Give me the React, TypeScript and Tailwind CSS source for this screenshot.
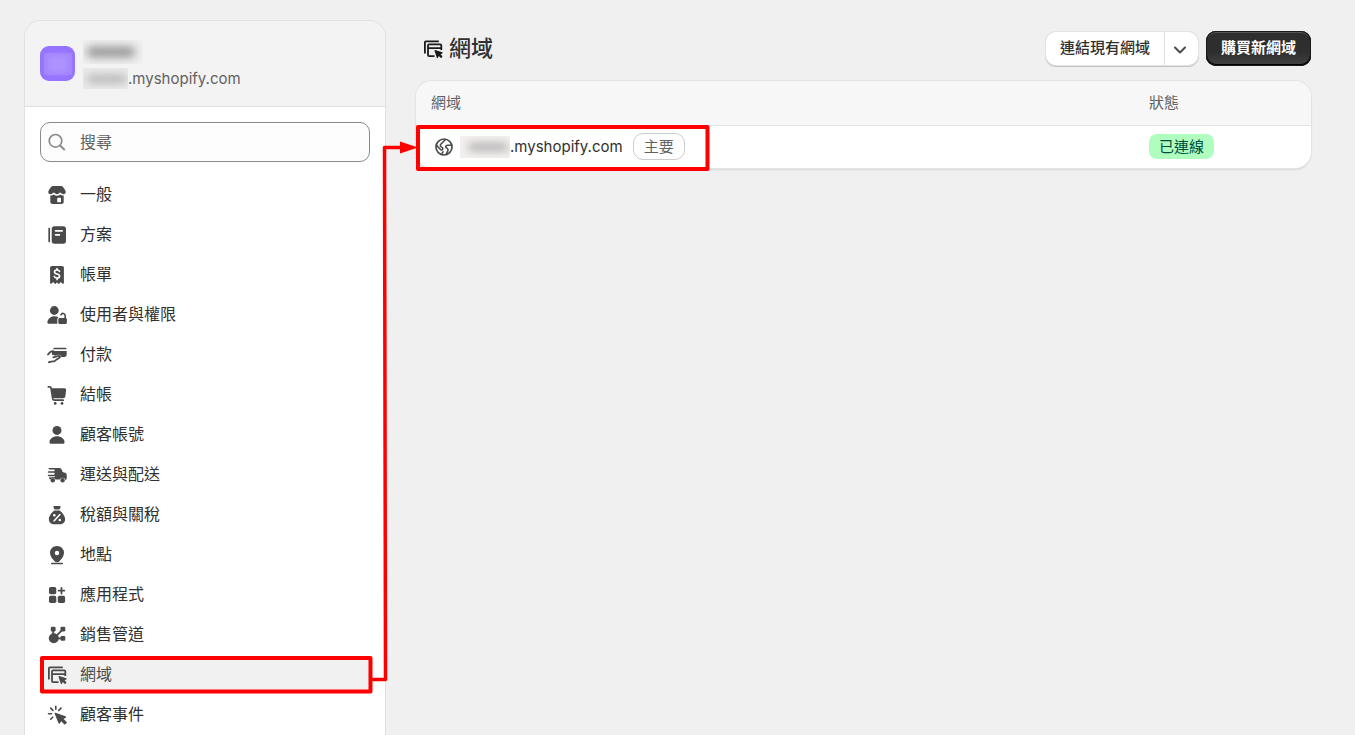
import type { ReactNode } from "react";

function Icon({ children, className = "text-[#4a4a4a]" }: { children: ReactNode; className?: string }) {
  return (
    <svg viewBox="0 0 20 20" fill="currentColor" aria-hidden="true" className={`size-5 shrink-0 ${className}`}>
      {children}
    </svg>
  );
}

const line = { fill: "none", stroke: "currentColor", strokeLinecap: "round", strokeLinejoin: "round" } as const;

const StoreIcon = (
  <>
    <path d="M6 1h8c.8 0 1.500.3 2 .9l2.200 3.300c.9 1.500.7 3.200-.8 3.800-1.300.5-2.600 0-3.400-1-.5-.7-1.200-.7-1.700 0-.6.700-1.400 1.200-2.300 1.200S8.300 8.700 7.700 8c-.5-.7-1.200-.7-1.700 0-.8 1-2.100 1.500-3.400 1C1.100 8.400.9 6.700 1.800 5.200L4 1.900C4.500 1.300 5.200 1 6 1z" />
    <path d="M3.300 10.500c1.300.2 2.500-.1 3.500-.9 1 .8 2.100 1.200 3.200 1.200s2.200-.4 3.200-1.200c1 .8 2.200 1.100 3.500.9v6a2.500 2.500 0 0 1-2.500 2.500H5.800a2.500 2.500 0 0 1-2.500-2.500z" />
    <path d="M11 12.700h2.200c.4 0 .8.4.8.8v3.700h-3.800v-3.700c0-.4.4-.8.8-.8z" fill="#fff" />
  </>
);

const PlanIcon = (
  <>
    <path d="M7.500 1.200h8.700a2.800 2.800 0 0 1 2.800 2.800v12a2.800 2.800 0 0 1-2.800 2.800H7.500A2.800 2.800 0 0 1 4.700 16V4a2.800 2.800 0 0 1 2.800-2.800z" />
    <path {...line} strokeWidth="1.700" d="M2.200 3.600v12.800" />
    <path {...line} stroke="#fff" strokeWidth="1.700" d="M8.600 5.800h6.600M8.600 9.800h3.800" />
  </>
);

const BillIcon = (
  <>
    <path d="M5 1h10c1.200 0 1.900.7 1.900 1.900v15c0 .9-.9 1.200-1.500.7l-1.700-1.500-1.300 1.400c-.4.5-1 .5-1.400 0l-1-1.200-1 1.200c-.4.5-1 .5-1.400 0l-1.300-1.400-1.700 1.500c-.6.5-1.500.2-1.500-.7v-15C3.100 1.700 3.800 1 5 1z" />
    <path {...line} stroke="#fff" strokeWidth="1.700" d="M12.500 6.300c-.4-.9-1.300-1.300-2.500-1.300-1.500 0-2.500.7-2.500 1.900 0 2.900 5.100 1.400 5.100 4.100 0 1.200-1.100 2-2.600 2-1.300 0-2.300-.6-2.700-1.500M10 3.700v1.200M10 13.200v1.200" />
  </>
);

const UsersIcon = (
  <>
    <circle cx="7.300" cy="5.500" r="4.400" />
    <path d="M7.300 11.200c1.700 0 3.100.4 4.200 1.100-.8.5-1.200 1.200-1.200 2.200v4.300H2.100C1 18.800.2 17.900.4 16.900c.6-3.200 3.300-5.700 6.900-5.700z" />
    <path d="M12.800 13h5.600c.9 0 1.500.6 1.500 1.500v2.900c0 .9-.6 1.500-1.500 1.500h-5.600c-.9 0-1.500-.6-1.500-1.500v-2.900c0-.9.6-1.500 1.500-1.500z" />
    <path {...line} strokeWidth="1.600" d="M18.200 13.500v-3a2.200 2.200 0 0 0-4.200-.8" />
  </>
);

const PaymentIcon = (
  <>
    <path d="M8 2.700h10c1 0 1.600.6 1.700 1.500H5.800c.5-.9 1.200-1.500 2.200-1.500z" />
    <path d="M5 6h14.700v3.500c0 1.500-.9 2.400-2.400 2.400h-3.100c.1-1.700-1.600-2.600-3.200-2.100l-3 .9c-.5-.8-1.800-.9-2.900-.4z" />
    <path {...line} strokeWidth="1.800" d="M1 9.500c1.300-1.900 2.700-3.100 5.300-3.300M6.300 12.300l5-1.300c1.800-.4 2.200 1.300.8 2l-2.500 1.500c-1.300 1.700-3.200 2.200-5.400 2.200-1 0-1.700.2-2.300.6" />
  </>
);

const CartIcon = (
  <>
    <path d="M4.200 3.300h13.400c1 0 1.600.7 1.500 1.700l-.7 6.300a2.200 2.200 0 0 1-2.200 1.900H6.300z" />
    <path {...line} strokeWidth="1.700" d="M1.300 1.800h1.400c.7 0 1.200.4 1.300 1.100l1.700 10.800c.2 1 .8 1.500 1.700 1.500h8.800" />
    <circle cx="8.200" cy="18.400" r="1.400" />
    <circle cx="15" cy="18.400" r="1.400" />
  </>
);

const PersonIcon = (
  <>
    <circle cx="10" cy="5.400" r="4.500" />
    <path d="M10 11.200c3.900 0 6.700 2.200 7.500 5.200.3 1.300-.5 2.400-1.800 2.400H4.300c-1.300 0-2.100-1.100-1.800-2.400.8-3 3.600-5.200 7.500-5.200z" />
  </>
);

const TruckIcon = (
  <>
    <path d="M8 3h4.500c1 0 1.800.6 2.100 1.500l1 2.500 2.300.7c1.100.3 1.800 1.200 1.800 2.400v2.800c0 1-.4 1.700-1.200 2a3 3 0 0 0-5.700-.3H8.600a3 3 0 0 0-5.500.2c-.6-.3-.9-.9-.9-1.700v-.9h4.500c1.800 0 1.900-2.300.4-2.500.9-.8.7-2.100-.3-2.500 1-.8 1.200-2.500.2-4z" />
    <path {...line} strokeWidth="1.500" d="M2.300 3.800h6M1.500 7h6M1.500 10.400h6" />
    <circle cx="5.800" cy="15.200" r="2.200" />
    <circle cx="15.600" cy="15.200" r="2.200" />
  </>
);

const TaxIcon = (
  <>
    <path d="M7.300 1h5.400c.9 0 1.300.8.8 1.500l-1.200 1.900H7.700L6.500 2.500C6 1.800 6.400 1 7.300 1z" />
    <path d="M7.500 5.500h5c3 2.100 5.600 5.600 5.600 8.800 0 3.200-2.200 5-5.400 5H7.300c-3.200 0-5.400-1.800-5.400-5 0-3.200 2.600-6.700 5.600-8.800z" />
    <path {...line} stroke="#fff" strokeWidth="1.600" d="M12.900 9.500l-5.700 6.300" />
    <circle cx="7.300" cy="10.300" r="1.300" fill="#fff" />
    <circle cx="12.800" cy="15" r="1.300" fill="#fff" />
  </>
);

const PinIcon = (
  <>
    <path fillRule="evenodd" d="M10 1c4 0 7 2.900 7 6.700 0 3.600-2.500 6.200-4.300 8.300-1.500 1.800-3.900 1.800-5.400 0C5.500 13.900 3 11.300 3 7.700 3 3.900 6 1 10 1zm0 4.800a2.200 2.200 0 1 0 0 4.400 2.200 2.200 0 0 0 0-4.400z" />
    <path {...line} strokeWidth="1.700" d="M4.800 18.500h10.400" />
  </>
);

const AppsIcon = (
  <>
    <rect x="2" y="2" width="7.300" height="7.300" rx="1.700" />
    <rect x="2" y="10.700" width="7.300" height="7.300" rx="1.700" />
    <rect x="10.800" y="10.700" width="7.300" height="7.300" rx="1.700" />
    <path {...line} strokeWidth="1.800" d="M14.500 2.900v5.600M11.700 5.700h5.600" />
  </>
);

const ChannelsIcon = (
  <>
    <circle cx="6.800" cy="13.300" r="5" />
    <rect x="3.800" y="1.800" width="4.800" height="4.800" rx="1.300" />
    <rect x="13.500" y="1.800" width="4.800" height="4.800" rx="1.300" />
    <rect x="13.500" y="11" width="4.800" height="4.800" rx="1.300" />
    <path {...line} strokeWidth="1.800" d="M6.200 6v4M15 5.200l-5.500 5.600M10.500 13.400h4" />
  </>
);

const DomainIcon = (
  <>
    <path {...line} strokeWidth="1.800" strokeLinecap="butt" d="M1.900 14.500V3.300c0-.6.4-1 1-1h12.900M11.500 17.100H6.100c-.7 0-1.100-.4-1.100-1.100V6.500c0-.7.4-1.100 1.100-1.100h11.100c.7 0 1.100.4 1.100 1.100V11M5 9.200h13.300" />
    <path d="M12.200 11l7 2.300c.6.200.6.900.1 1.100l-1.700.9 1.600 1.700c.3.300.3.600 0 .9l-.8.8c-.3.300-.6.300-.9 0l-1.700-1.600-.9 1.700c-.2.500-.9.500-1.100-.1l-2.300-7c-.1-.4.300-.8.700-.7z" />
  </>
);

const EventsIcon = (
  <>
    <path d="M8.600 7.700l9.900 3.500c.7.300.7 1.100.1 1.500l-2 1.200 3 3c.4.400.4.700 0 1.100l-1.300 1.300c-.4.400-.8.400-1.100 0l-3-3.100-1.300 2.100c-.4.600-1.200.5-1.500-.2L7.600 8.600c-.2-.6.4-1.100 1-.9z" />
    <path {...line} strokeWidth="1.600" d="M8.800 1.300v3M3.700 3.100l2.200 2.300M14 3.100l-2.200 2.300M1.500 8.800h3M3.700 14.200l2-2" />
  </>
);

const navItems: { label: string; icon: ReactNode }[] = [
  { label: "一般", icon: StoreIcon },
  { label: "方案", icon: PlanIcon },
  { label: "帳單", icon: BillIcon },
  { label: "使用者與權限", icon: UsersIcon },
  { label: "付款", icon: PaymentIcon },
  { label: "結帳", icon: CartIcon },
  { label: "顧客帳號", icon: PersonIcon },
  { label: "運送與配送", icon: TruckIcon },
  { label: "稅額與關稅", icon: TaxIcon },
  { label: "地點", icon: PinIcon },
  { label: "應用程式", icon: AppsIcon },
  { label: "銷售管道", icon: ChannelsIcon },
  { label: "網域", icon: DomainIcon },
  { label: "顧客事件", icon: EventsIcon },
];

function Sidebar() {
  return (
    <aside className="flex w-[360px] shrink-0 flex-col overflow-hidden rounded-t-2xl bg-white shadow-[0_0_0_1px_#e1e1e1]">
      <header className="flex h-[86px] shrink-0 items-center gap-2 border-b border-[#e1e1e1] bg-[#f3f3f3] px-[15px]">
        <div className="flex size-[35px] items-center justify-center rounded-[9px] bg-[#9574ff]">
          <div className="h-[22px] w-7 bg-[#a283ff]">
            <div className="h-full w-full scale-75 bg-[#ad93ff] blur-[4px]" />
          </div>
        </div>
        <div className="flex flex-col gap-1 pt-[2px]">
          <div className="flex h-6 w-[60px] items-center overflow-hidden bg-[#f0f0f0]">
            <div className="ml-1 h-[10px] w-12 rounded-sm bg-[#8f8f8f] blur-[5px]" />
          </div>
          <div className="flex h-[21px] items-center">
            <div className="flex h-[21px] w-[45px] items-center overflow-hidden bg-[#eaeaea]">
              <div className="ml-1 h-2 w-10 rounded-sm bg-[#b5b5b5] blur-[4px]" />
            </div>
            <span className="pt-[2px] text-[15px] text-[#616161]">.myshopify.com</span>
          </div>
        </div>
      </header>
      <div className="flex flex-col gap-[14px] px-[15px] pt-[15px]">
        <label className="flex h-10 items-center gap-[13px] rounded-[10px] border border-[#8a8a8a] bg-[#fdfdfd] px-[6px]">
          <Icon className="text-[#8a8a8a]">
            <circle {...line} strokeWidth="1.700" cx="8.500" cy="8.800" r="6.300" />
            <path {...line} strokeWidth="1.900" d="M13.200 13.500l4 4" />
          </Icon>
          <input
            type="search"
            aria-label="搜尋"
            placeholder="搜尋"
            className="min-w-0 flex-1 bg-transparent text-base outline-none placeholder:text-[#616161]"
          />
        </label>
        <nav className="flex flex-col gap-1">
          {navItems.map(({ label, icon }) => {
            const active = label === "網域";
            return (
              <a
                key={label}
                href="#"
                aria-current={active ? "page" : undefined}
                className={`flex h-9 items-center gap-[13px] rounded-lg px-[7px] text-base ${active ? "bg-[#f1f1f1] text-[#4a4a4a]" : "text-[#303030]"}`}
              >
                <Icon className="mt-[2px] text-[#4a4a4a]">{icon}</Icon>
                {label}
              </a>
            );
          })}
        </nav>
      </div>
    </aside>
  );
}

function DomainTable() {
  return (
    <div className="overflow-hidden rounded-2xl bg-white shadow-[0_0_0_1px_#e3e3e3,0_1px_0_0_#c4c4c4,0_2px_2px_0_#d8d8d8]">
      <table className="w-full table-fixed text-left text-[15px]">
        <thead>
          <tr className="h-11 border-b border-[#e3e3e3] bg-[#f7f7f7] text-[#616161]">
            <th className="px-[15px] font-normal">網域</th>
            <th className="w-[162px] font-normal">狀態</th>
          </tr>
        </thead>
        <tbody>
          <tr className="h-[43px]">
            <td className="pl-[18px]">
              <div className="flex items-center">
                <Icon>
                  <circle {...line} strokeWidth="1.700" cx="10" cy="10" r="8" />
                  <path {...line} strokeWidth="1.600" d="M2.500 8.300l4 4.200c.9.900 2.300.4 2.300-.8 0-.6-.3-1-.8-1.300L7 9.700c-.8-.6-.9-1.700-.2-2.400L11.500 2.500M8.300 17.500v-1.300c0-.6.300-1 .8-1.300M17.700 8.300h-3.800c-1.900 0-2.700 1.200-1.900 2.200.5.700 1.500.7 1.900 1.600.4.800.1 1.500-.3 2.200l-1.500 3" />
                </Icon>
                <div className="ml-[6px] flex h-[22px] w-[50px] items-center overflow-hidden bg-[#f5f0f0]">
                  <div className="ml-2 h-2 w-10 rounded-sm bg-[#b0b0b0] blur-[4px]" />
                </div>
                <a href="#" className="text-[#303030]">.myshopify.com</a>
                <span className="ml-[10px] flex h-[27px] items-center rounded-[10px] border border-[#cccccc] px-[10px] text-[#616161]">
                  主要
                </span>
              </div>
            </td>
            <td>
              <span className="inline-flex h-[25px] items-center rounded-lg bg-[#affebf] px-[10px] text-[#014b40]">
                已連線
              </span>
            </td>
          </tr>
        </tbody>
      </table>
    </div>
  );
}

export default function App() {
  return (
    <div className="relative flex h-screen gap-[31px] overflow-hidden bg-[#f0f0f0] pt-[21px] pr-11 pl-[25px] font-['Inter','Noto_Sans_CJK_TC',sans-serif] text-[#303030]">
      <Sidebar />
      <main className="flex min-w-0 flex-1 flex-col gap-[15px] pt-[10px]">
        <div className="flex h-[35px] items-center justify-between">
          <h1 className="flex items-center gap-[6px] pl-[7px] text-[22px] font-medium text-[#303030]">
            <Icon className="text-[#1a1a1a]">{DomainIcon}</Icon>
            網域
          </h1>
          <div className="flex items-center gap-2 text-[15px] font-medium">
            <div className="flex h-[33px] rounded-[10px] bg-white shadow-[0_0_0_1px_#e3e3e3,0_1px_0_1px_#c4c4c4]">
              <button type="button" className="px-[14px]">連結現有網域</button>
              <button type="button" aria-label="更多動作" className="flex w-[34px] items-center justify-center border-l border-[#e1e1e1] pr-[2px]">
                <Icon className="mt-[2px] text-[#4a4a4a]">
                  <path {...line} strokeWidth="2" d="M5 7.500l5 5 5-5" />
                </Icon>
              </button>
            </div>
            <button
              type="button"
              className="h-[35px] rounded-[10px] bg-linear-to-b from-[#2e2e2e] from-60% to-[#434343] px-[15px] font-bold text-white shadow-[inset_0_0_0_1px_#1a1a1a,inset_0_-1px_0_1px_#000,inset_0_2px_0_0_#555]"
            >
              購買新網域
            </button>
          </div>
        </div>
        <DomainTable />
      </main>
      <svg
        aria-hidden="true"
        className="pointer-events-none absolute top-0 left-0 h-[735px] w-[720px]"
        viewBox="0 0 720 735"
        fill="none"
        stroke="#ff0000"
        strokeWidth="4"
        strokeLinejoin="round"
      >
        <rect x="42" y="658" width="328.500" height="33.500" />
        <rect x="418" y="127" width="289.500" height="42" />
        <path d="M372 679.500H385.500L384.500 147.500H402" strokeWidth="3.500" />
        <path d="M400 141.500L418 147.500L400 153.500Z" fill="#ff0000" stroke="none" />
      </svg>
    </div>
  );
}
